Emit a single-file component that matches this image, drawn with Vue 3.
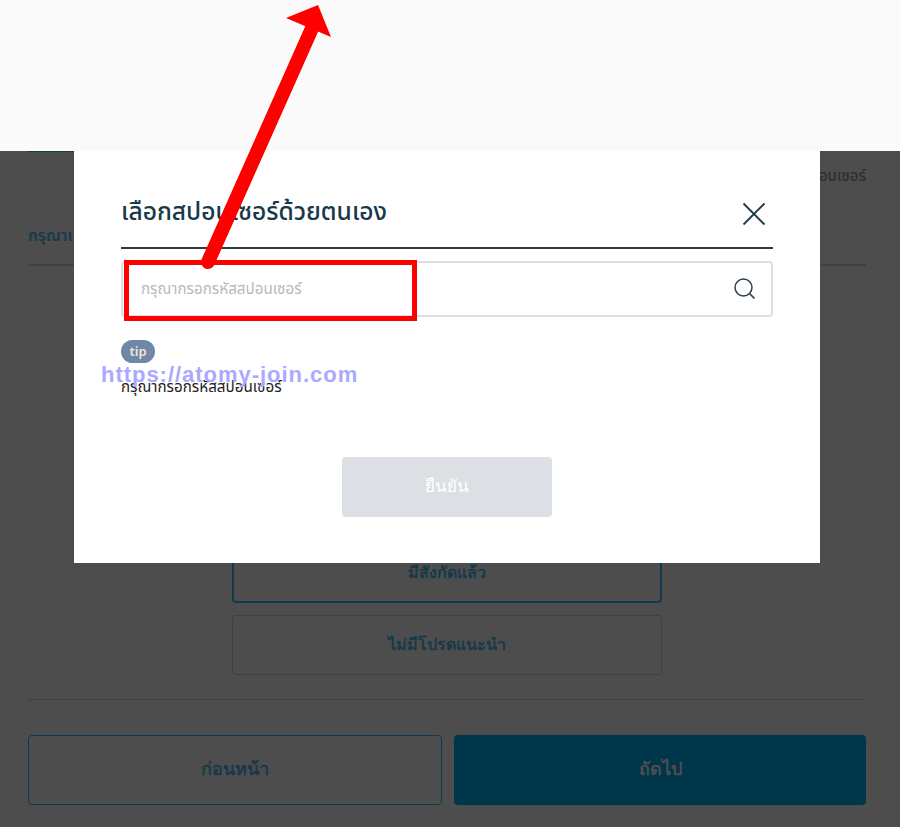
<template>
  <div class="page">
    <div class="top-band"></div>

    <div class="under">
      <div class="tabs">
        <span class="tab-line"></span>
        <span class="tab-text">เลือกสปอนเซอร์</span>
      </div>
      <div class="section-head">กรุณาเลือกสปอนเซอร์</div>
      <div class="choices">
        <button class="choice active">มีสังกัดแล้ว</button>
        <button class="choice">ไม่มี โปรดแนะนำ</button>
      </div>
      <div class="actions">
        <button class="btn-prev">ก่อนหน้า</button>
        <button class="btn-next">ถัดไป</button>
      </div>
    </div>

    <div class="modal">
      <div class="modal-head">
        <h2>เลือกสปอนเซอร์ด้วยตนเอง</h2>
        <svg class="close" width="24" height="24" viewBox="0 0 24 24" fill="none">
          <path d="M1.5 1.5l21 21M22.5 1.5l-21 21" stroke="#1f3a48" stroke-width="1.9" />
        </svg>
      </div>
      <div class="search">
        <span class="placeholder">กรุณากรอกรหัสสปอนเซอร์</span>
        <svg width="24" height="24" viewBox="0 0 24 24" fill="none">
          <circle cx="10.5" cy="10.5" r="8.5" stroke="#2a3f4b" stroke-width="1.5" />
          <path d="M16.5 16.5l5 5" stroke="#2a3f4b" stroke-width="1.7" />
        </svg>
      </div>
      <span class="tip">tip</span>
      <p class="tip-text">กรุณากรอกรหัสสปอนเซอร์</p>
      <button class="confirm">ยืนยัน</button>
    </div>

    <!-- annotations drawn on top of the screenshot -->
    <svg class="arrow" width="900" height="330" viewBox="0 0 900 330" fill="none">
      <path d="M208 262L313 26" stroke="#ff0000" stroke-width="14" stroke-linecap="round" />
      <path d="M286 18L318 5L331 37Z" fill="#ff0000" />
    </svg>
    <div class="red-box"></div>
    <div class="watermark">https://atomy-join.com</div>
  </div>
</template>

<script setup>
</script>

<style>
html,
body {
  margin: 0;
  background: #4d4d4d;
}
</style>

<style scoped>
.page {
  position: relative;
  width: 900px;
  height: 827px;
  overflow: hidden;
  background: #4d4d4d;
  font-family: "Noto Sans", "Noto Sans Thai", "DejaVu Sans", sans-serif;
}

.top-band {
  height: 151px;
  background: #fafafa;
}

.under {
  display: flex;
  flex-direction: column;
  padding: 0 34px 0 28px;
  color: #17394a;
}

.tabs {
  position: relative;
  height: 44px;
  display: flex;
  justify-content: flex-end;
  align-items: center;
  padding-top: 7px;
  box-sizing: border-box;
  font-size: 15px;
  font-weight: 500;
  color: #2a2f33;
}

.tab-line {
  position: absolute;
  left: 0;
  top: 0;
  width: 46px;
  height: 1px;
  background: #17394a;
}

.section-head {
  height: 71px;
  padding-top: 26px;
  box-sizing: border-box;
  border-bottom: 2px solid #3e4445;
  font-size: 16px;
  font-weight: 600;
  line-height: 28px;
}

.choices {
  display: flex;
  flex-direction: column;
  align-items: center;
  gap: 12px;
  padding: 277px 0 24px;
  border-bottom: 1px solid #404040;
}

.choice {
  width: 430px;
  height: 60px;
  padding-bottom: 2px;
  background: transparent;
  border: 1px solid #404040;
  border-radius: 4px;
  color: #17394a;
  font: 600 16px "Noto Sans", "DejaVu Sans", sans-serif;
  word-spacing: -4px;
}

.choice.active {
  border: 2px solid #0f3a4d;
}

.actions {
  display: flex;
  gap: 12px;
  padding-top: 35px;
}

.actions button {
  flex: 1;
  height: 70px;
  padding-bottom: 5px;
  border-radius: 4px;
  font: 600 18px "Noto Sans", "DejaVu Sans", sans-serif;
}

.btn-prev {
  background: transparent;
  border: 1px solid #0f3a4d;
  color: #17394a;
}

.btn-next {
  background: #00364a;
  border: 0;
  color: #4d4d4d;
}

.modal {
  position: absolute;
  left: 74px;
  top: 151px;
  width: 746px;
  height: 412px;
  padding: 0 47px;
  box-sizing: border-box;
  background: #fff;
  display: flex;
  flex-direction: column;
  align-items: flex-start;
}

.modal-head {
  align-self: stretch;
  height: 98px;
  display: flex;
  justify-content: space-between;
  align-items: flex-end;
  padding-bottom: 19px;
  box-sizing: border-box;
  border-bottom: 2px solid #33383b;
}

.modal-head h2 {
  margin: 0;
  font-size: 24.6px;
  font-weight: 500;
  line-height: 34px;
  color: #17394a;
}

.close {
  margin-right: 7px;
  margin-bottom: 2px;
}

.search {
  align-self: stretch;
  height: 56px;
  margin-top: 12px;
  padding: 0 14px 0 18px;
  box-sizing: border-box;
  border: 2px solid #dcdfe3;
  border-radius: 4px;
  display: flex;
  justify-content: space-between;
  align-items: center;
}

.placeholder {
  font-size: 15.2px;
  color: #b9b9b9;
}

.tip {
  margin-top: 23px;
  width: 34px;
  height: 23px;
  border-radius: 12px;
  background: #6f87a8;
  color: #f3e6d2;
  font-size: 13px;
  font-weight: 600;
  line-height: 22px;
  text-align: center;
}

.tip-text {
  margin: 12px 0 0;
  font-size: 15.2px;
  line-height: 22px;
  color: #222;
}

.confirm {
  align-self: center;
  margin-top: 60px;
  width: 210px;
  height: 60px;
  padding-bottom: 4px;
  border: 0;
  border-radius: 4px;
  background: #dcdfe4;
  color: #fff;
  font: 500 17px "Noto Sans", "DejaVu Sans", sans-serif;
}

.arrow {
  position: absolute;
  left: 0;
  top: 0;
  pointer-events: none;
}

.red-box {
  position: absolute;
  left: 124px;
  top: 260px;
  width: 293px;
  height: 61px;
  box-sizing: border-box;
  border: 5px solid #ff0000;
}

.watermark {
  position: absolute;
  left: 101px;
  top: 362px;
  font-family: "Liberation Sans", Arial, sans-serif;
  font-size: 22px;
  font-weight: 700;
  line-height: 26px;
  letter-spacing: 0.97px;
  color: #a9a9ff;
}
</style>
